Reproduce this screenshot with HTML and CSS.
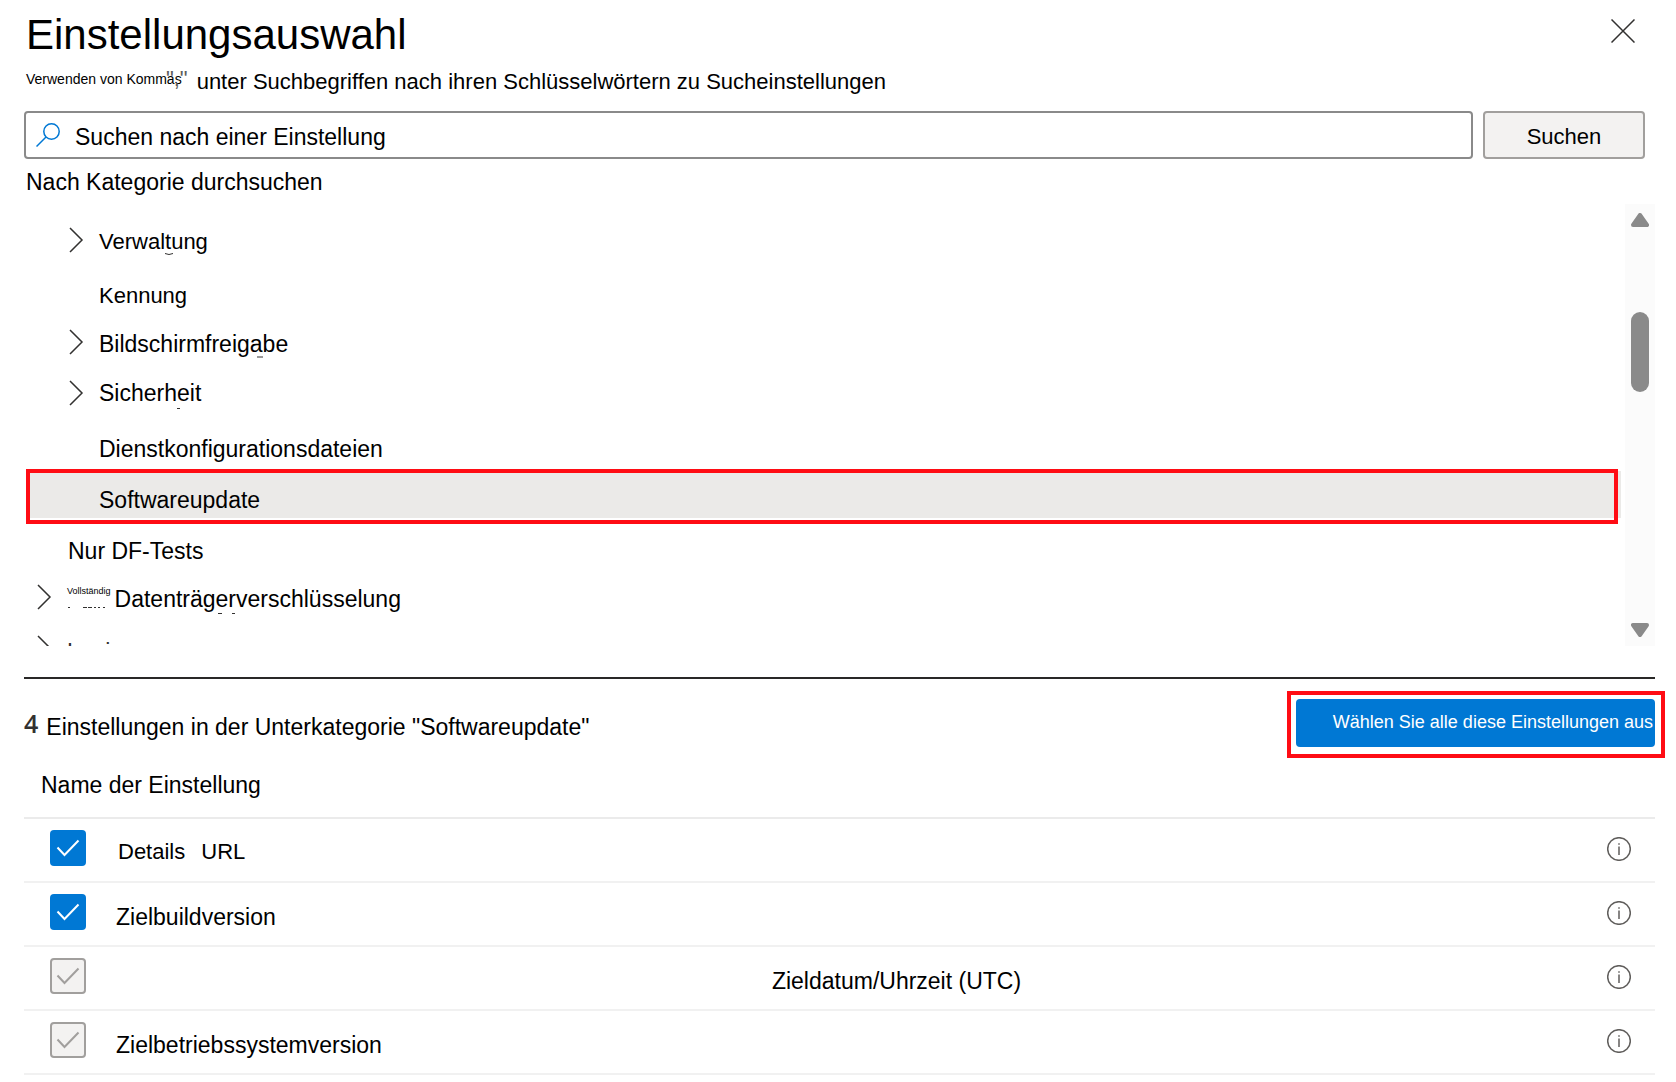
FILE: index.html
```html
<!DOCTYPE html>
<html lang="de">
<head>
<meta charset="utf-8">
<title>Einstellungsauswahl</title>
<link rel="stylesheet" href="styles.css">
</head>
<body>
<main class="panel">
  <header class="panel-header">
    <h1 class="panel-title">Einstellungsauswahl</h1>
    <button class="close-button" type="button" aria-label="Schließen">
      <svg width="24" height="24" viewBox="0 0 24 24"><path d="M.5 .5 23.500 23.500M23.500 .5 .5 23.500" fill="none" stroke="#323130" stroke-width="1.500"/></svg>
    </button>
  </header>

  <p class="hint">
    <span class="hint-lead">Verwenden von Kommas<span class="hint-mark">","</span></span>
    <span>unter Suchbegriffen nach ihren Schlüsselwörtern zu Sucheinstellungen</span>
  </p>

  <form class="search">
    <label class="search-box">
      <svg width="24" height="24" viewBox="0 0 24 24"><g fill="none" stroke="#0078d4" stroke-width="1.500"><circle cx="15.500" cy="8.500" r="7.700"/><path d="M10 14 .5 23.500"/></g></svg>
      <input class="search-input" type="text" placeholder="Suchen nach einer Einstellung" aria-label="Suchen nach einer Einstellung">
    </label>
    <button class="search-button" type="button">Suchen</button>
  </form>

  <h2 class="browse-label">Nach Kategorie durchsuchen</h2>

  <div class="browser">
    <ul class="tree">
      <li class="tree-item">
        <button class="tree-row nested compact" type="button"><svg class="chevron" viewBox="0 0 16 26"><path d="M2 1 14 13 2 25"/></svg><span class="tree-label">Verwaltung</span></button>
        <svg class="tree-trace"><path d="M139 37.500q4 2 8 0"/></svg>
      </li>
      <li class="tree-item">
        <button class="tree-row nested leaf compact" type="button">Kennung</button>
      </li>
      <li class="tree-item">
        <button class="tree-row nested" type="button"><svg class="chevron" viewBox="0 0 16 26"><path d="M2 1 14 13 2 25"/></svg><span class="tree-label">Bildschirmfreigabe</span></button>
        <svg class="tree-trace"><path d="M231 39h6"/></svg>
      </li>
      <li class="tree-item">
        <button class="tree-row nested" type="button"><svg class="chevron" viewBox="0 0 16 26"><path d="M2 1 14 13 2 25"/></svg><span>Sicherheit</span></button>
        <svg class="tree-trace"><path d="M151 39.500h3"/></svg>
      </li>
      <li class="tree-item">
        <button class="tree-row nested leaf" type="button">Dienstkonfigurationsdateien</button>
      </li>
      <li class="tree-item">
        <button class="tree-row nested leaf selected" type="button">Softwareupdate</button>
        <span class="callout callout-row"></span>
      </li>
      <li class="tree-item">
        <button class="tree-row leaf" type="button">Nur DF-Tests</button>
      </li>
      <li class="tree-item">
        <button class="tree-row" type="button"><svg class="chevron" viewBox="0 0 16 26"><path d="M2 1 14 13 2 25"/></svg><span class="split-label"><span class="tree-prefix">Vollständig</span><span class="tree-label">Datenträgerverschlüsselung</span></span></button>
        <svg class="tree-trace"><path d="M42 34.500h2M57 34.500h4M62 34.500h4M68 34.500h2M72 34.500h2M77 34.500h2M192 40.500h4M206 40.500h3"/></svg>
      </li>
      <li class="tree-item">
        <button class="tree-row" type="button"><svg class="chevron" viewBox="0 0 16 26"><path d="M2 1 14 13 2 25"/></svg><span class="next-label">Login</span></button>
      </li>
    </ul>
    <div class="scrollbar">
      <svg width="18" height="14" viewBox="0 0 18 14"><path d="M9 2 16 12H2z"/></svg>
      <span class="scroll-thumb"></span>
      <svg width="18" height="14" viewBox="0 0 18 14"><path d="M9 12 2 2H16z"/></svg>
    </div>
  </div>

  <section class="results">
    <div class="summary">
      <h2 class="summary-title"><span class="count">4</span><span class="summary-text">Einstellungen in der Unterkategorie "Softwareupdate"</span></h2>
      <div class="select-all">
        <button class="select-all-button" type="button">Wählen Sie alle diese Einstellungen aus</button>
        <span class="callout callout-button"></span>
      </div>
    </div>

    <table class="settings">
      <thead>
        <tr><th colspan="3" scope="col">Name der Einstellung</th></tr>
      </thead>
      <tbody>
        <tr>
          <td class="cell-check"><span class="check"><input type="checkbox" id="s1" checked><svg viewBox="0 0 36 36"><path d="M7.500 17.500 14.500 25 28.500 10.500"/></svg></span></td>
          <td class="cell-name"><label class="split-name" for="s1"><span>Details</span><span>URL</span></label></td>
          <td class="cell-info"><button class="info" type="button" aria-label="Info"><svg viewBox="0 0 24 24"><circle cx="12" cy="12" r="11.300"/><path d="M12 9.500V18M12 6.200v1.600"/></svg></button></td>
        </tr>
        <tr>
          <td class="cell-check"><span class="check"><input type="checkbox" id="s2" checked><svg viewBox="0 0 36 36"><path d="M7.500 17.500 14.500 25 28.500 10.500"/></svg></span></td>
          <td class="cell-name"><label for="s2">Zielbuildversion</label></td>
          <td class="cell-info"><button class="info" type="button" aria-label="Info"><svg viewBox="0 0 24 24"><circle cx="12" cy="12" r="11.300"/><path d="M12 9.500V18M12 6.200v1.600"/></svg></button></td>
        </tr>
        <tr>
          <td class="cell-check"><span class="check"><input type="checkbox" id="s3" checked disabled><svg viewBox="0 0 36 36"><path d="M7.500 17.500 14.500 25 28.500 10.500"/></svg></span></td>
          <td class="cell-name centered"><label for="s3">Zieldatum/Uhrzeit (UTC)</label></td>
          <td class="cell-info"><button class="info" type="button" aria-label="Info"><svg viewBox="0 0 24 24"><circle cx="12" cy="12" r="11.300"/><path d="M12 9.500V18M12 6.200v1.600"/></svg></button></td>
        </tr>
        <tr>
          <td class="cell-check"><span class="check"><input type="checkbox" id="s4" checked disabled><svg viewBox="0 0 36 36"><path d="M7.500 17.500 14.500 25 28.500 10.500"/></svg></span></td>
          <td class="cell-name"><label for="s4">Zielbetriebssystemversion</label></td>
          <td class="cell-info"><button class="info" type="button" aria-label="Info"><svg viewBox="0 0 24 24"><circle cx="12" cy="12" r="11.300"/><path d="M12 9.500V18M12 6.200v1.600"/></svg></button></td>
        </tr>
      </tbody>
    </table>
  </section>
</main>
</body>
</html>
```
FILE: styles.css
```css
* {
  box-sizing: border-box;
}

body {
  margin: 0;
  background: #fff;
  color: #000;
  font-family: "Liberation Sans", Arial, sans-serif;
  font-size: 23px;
  line-height: 28px;
}

button,
input {
  margin: 0;
  padding: 0;
  border: 0;
  background: none;
  color: inherit;
  font: inherit;
}

svg {
  display: block;
}

.panel {
  padding: 11px 21px 0 24px;
}

.panel-header {
  display: flex;
  justify-content: space-between;
  align-items: flex-start;
  padding: 0 20px 0 2px;
}

.panel-title {
  margin: 0;
  font-size: 42px;
  font-weight: 400;
  line-height: 48px;
}

.close-button {
  margin-top: 8px;
}

.hint {
  display: flex;
  align-items: flex-start;
  gap: 15px;
  margin: 10px 2px 16px;
  font-size: 22px;
  line-height: 26px;
}

.hint-lead {
  position: relative;
  font-size: 14px;
  line-height: 20px;
}

.hint-mark {
  position: absolute;
  top: 0;
  right: -6px;
  color: #605e5c;
  font-size: 22px;
}

.search {
  display: flex;
  gap: 10px;
  margin-right: 10px;
}

.search-box {
  display: flex;
  flex: 1;
  align-items: center;
  gap: 15px;
  height: 48px;
  padding-left: 10px;
  border: 2px solid #8a8a8a;
  border-radius: 4px;
}

.search-input {
  flex: 1;
  min-width: 0;
  padding-top: 4px;
  outline: none;
}

.search-input::placeholder {
  color: #000;
  opacity: 1;
}

.search-button {
  width: 162px;
  padding-top: 3px;
  border: 2px solid #a19f9d;
  border-radius: 4px;
  background: #f3f2f1;
  font-size: 22px;
}

.browse-label {
  margin: 9px 2px 8px;
  font-size: 23px;
  font-weight: 400;
}

.browser {
  display: flex;
  gap: 4px;
  height: 442px;
  padding-left: 2px;
  overflow: hidden;
}

.tree {
  display: flex;
  flex: 1;
  flex-direction: column;
  gap: 4px;
  margin: 0;
  padding: 12px 0 0;
  list-style: none;
}

.tree-item {
  position: relative;
}

.tree-row {
  display: flex;
  align-items: center;
  gap: 15px;
  width: 100%;
  height: 47px;
  padding-left: 10px;
  text-align: left;
}

.tree-row.nested {
  padding-left: 42px;
}

.tree-row.leaf {
  padding-top: 10px;
  padding-left: 42px;
}

.tree-row.nested.leaf {
  padding-left: 73px;
}

.tree-row.compact {
  font-size: 22px;
}

.tree-row.selected {
  background: #ebeae8;
}

.chevron {
  width: 16px;
  height: 26px;
  fill: none;
  stroke: #323130;
  stroke-width: 1.5;
}

.tree-trace {
  position: absolute;
  inset: 0;
  width: 100%;
  height: 100%;
  fill: none;
  stroke: #323130;
  pointer-events: none;
}

.tree-label {
  padding-top: 4px;
}

.split-label {
  display: flex;
  gap: 4px;
}

.tree-prefix {
  font-size: 9px;
  line-height: 20px;
}

.next-label {
  padding-top: 8px;
  color: #323130;
}

.callout {
  position: absolute;
  border: 4px solid #ff0c14;
  pointer-events: none;
}

.callout-row {
  inset: -2px 3px -6px 0;
}

.callout-button {
  inset: -8px -10px -11px -9px;
}

.scrollbar {
  display: flex;
  flex-direction: column;
  align-items: center;
  width: 30px;
  padding: 9px 0;
  background: #fbfbfb;
}

.scrollbar svg {
  fill: #8a8a8a;
  stroke: #8a8a8a;
  stroke-width: 4;
  stroke-linejoin: round;
}

.scroll-thumb {
  width: 18px;
  height: 80px;
  margin: 85px 0 231px;
  border-radius: 9px;
  background: #8a8a8a;
}

.results {
  margin-top: 31px;
  padding-top: 20px;
  border-top: 2px solid #292827;
}

.summary {
  display: flex;
  justify-content: space-between;
}

.summary-title {
  display: flex;
  gap: 8px;
  margin: 0;
  font-size: 23px;
  font-weight: 400;
}

.count {
  padding-top: 10px;
  color: #323130;
  font-family: "Open Sans", sans-serif;
  font-size: 25px;
  font-weight: 600;
}

.summary-text {
  padding-top: 14px;
}

.select-all {
  position: relative;
}

.select-all-button {
  width: 359px;
  height: 48px;
  padding: 0 2px 2px 0;
  border-radius: 4px;
  background: #0078d4;
  color: #fff;
  font-size: 18px;
  text-align: right;
}

.settings {
  width: 100%;
  border-collapse: separate;
  border-spacing: 0;
}

.settings th {
  padding: 24px 17px 18px;
  border-bottom: 2px solid #ebebeb;
  font-weight: 400;
  text-align: left;
}

.settings td {
  height: 64px;
  padding: 0;
  border-bottom: 2px solid #f1f1f1;
}

.settings .cell-check {
  width: 92px;
  padding: 0 0 4px 26px;
}

.settings .cell-name {
  padding-top: 6px;
}

.settings .centered {
  padding-left: 98px;
  text-align: center;
}

.settings .cell-info {
  width: 76px;
  padding: 0 24px 2px 28px;
}

.split-name {
  display: flex;
  gap: 16px;
  padding: 0 0 2px 2px;
  font-size: 22px;
}

.check {
  display: grid;
  width: 36px;
  height: 36px;
}

.check input,
.check svg {
  grid-area: 1 / 1;
  width: 36px;
  height: 36px;
}

.check input {
  appearance: none;
  border-radius: 4px;
  background: #0078d4;
}

.check svg {
  fill: none;
  stroke: #fff;
  stroke-width: 2;
  pointer-events: none;
}

.check input:disabled {
  border: 2px solid #a19f9d;
  background: #f3f2f1;
}

.check input:disabled + svg {
  stroke: #a19f9d;
}

.info {
  display: block;
  width: 24px;
  height: 24px;
}

.info svg {
  fill: none;
  stroke: #605e5c;
  stroke-width: 1.5;
}
```
